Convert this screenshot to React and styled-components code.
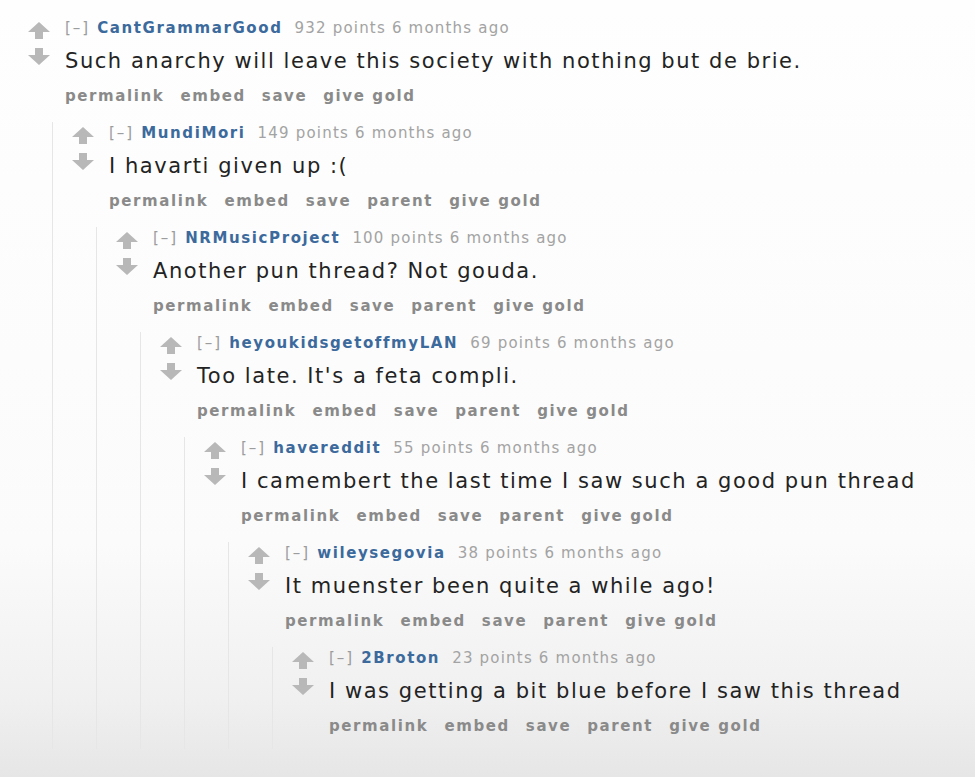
import React from 'react'
import styled, { createGlobalStyle } from 'styled-components'

const GlobalStyle = createGlobalStyle`
    html, body {
        margin: 0;
        padding: 0;
    }
    body {
        background: linear-gradient(180deg, #fdfefd 0%, #fbfbfb 70%, #f0f0f0 90%, #e6e6e6 100%);
        min-height: 777px;
    }
`

const StyledPage = styled.div`
    min-height: 777px;
    padding: 17px 0 0 28px;
    box-sizing: border-box;
    font-family: "DejaVu Sans", "Bitstream Vera Sans", Verdana, sans-serif;
`

const StyledComment = styled.div`
    display: grid;
    grid-template-columns: 37px 1fr;
`

const StyledVotes = styled.div`
    display: flex;
    flex-direction: column;
    gap: 9px;
    padding-top: 5px;
`

const StyledEntry = styled.div`
    display: flex;
    flex-direction: column;
    padding-bottom: ${({ $last }) => ($last ? '13px' : '0')};
`

const StyledTagline = styled.div`
    font-size: 15px;
    line-height: 20px;
    letter-spacing: 1.2px;
    color: #a3a3a3;
    white-space: nowrap;
    margin-top: 1px;
`

const StyledToggle = styled.span`
    color: #9c9c9c;
    letter-spacing: 2px;
    margin-right: 7px;
`

const StyledAuthor = styled.span`
    color: #3c6a9c;
    font-weight: bold;
    letter-spacing: 1.6px;
    margin-right: 12px;
`

const StyledBody = styled.div`
    font-size: 21px;
    line-height: 30px;
    letter-spacing: 1.55px;
    color: #232323;
    margin-top: 8px;
    white-space: nowrap;
`

const StyledButtons = styled.div`
    display: flex;
    gap: 16px;
    margin-top: 10px;
    font-size: 15px;
    line-height: 20px;
    letter-spacing: 1.6px;
    font-weight: bold;
    color: #8a8a8a;
`

const StyledChild = styled.div`
    grid-column: 1 / 3;
    margin: 16px 0 0 24px;
    border-left: 1px solid #e6e6e6;
    padding-left: 19px;
`

const Arrow = ({ down }) => (
    <svg
        width="22"
        height="17"
        viewBox="0 0 22 17"
        style={down ? { transform: 'scaleY(-1)' } : undefined}
    >
        <path d="M11 0 L22 10 L15 10 L15 17 L7 17 L7 10 L0 10 Z" fill="#b8b8b8" />
    </svg>
)

const THREAD = [
    { author: 'CantGrammarGood', points: 932, body: 'Such anarchy will leave this society with nothing but de brie.' },
    { author: 'MundiMori', points: 149, body: 'I havarti given up :(' },
    { author: 'NRMusicProject', points: 100, body: 'Another pun thread? Not gouda.' },
    { author: 'heyoukidsgetoffmyLAN', points: 69, body: "Too late. It's a feta compli." },
    { author: 'havereddit', points: 55, body: 'I camembert the last time I saw such a good pun thread' },
    { author: 'wileysegovia', points: 38, body: 'It muenster been quite a while ago!' },
    { author: '2Broton', points: 23, body: 'I was getting a bit blue before I saw this thread' },
]

const Comment = ({ depth }) => {
    const item = THREAD[depth]
    const hasChild = depth + 1 < THREAD.length
    const buttons = depth === 0
        ? ['permalink', 'embed', 'save', 'give gold']
        : ['permalink', 'embed', 'save', 'parent', 'give gold']

    return (
        <StyledComment>
            <StyledVotes>
                <Arrow />
                <Arrow down />
            </StyledVotes>
            <StyledEntry $last={!hasChild}>
                <StyledTagline>
                    <StyledToggle>[–]</StyledToggle>
                    <StyledAuthor>{item.author}</StyledAuthor>
                    {item.points} points 6 months ago
                </StyledTagline>
                <StyledBody>{item.body}</StyledBody>
                <StyledButtons>
                    {buttons.map((b) => (
                        <span key={b}>{b}</span>
                    ))}
                </StyledButtons>
            </StyledEntry>
            {hasChild && (
                <StyledChild>
                    <Comment depth={depth + 1} />
                </StyledChild>
            )}
        </StyledComment>
    )
}

export default function App() {
    return (
        <>
            <GlobalStyle />
            <StyledPage>
                <Comment depth={0} />
            </StyledPage>
        </>
    )
}
